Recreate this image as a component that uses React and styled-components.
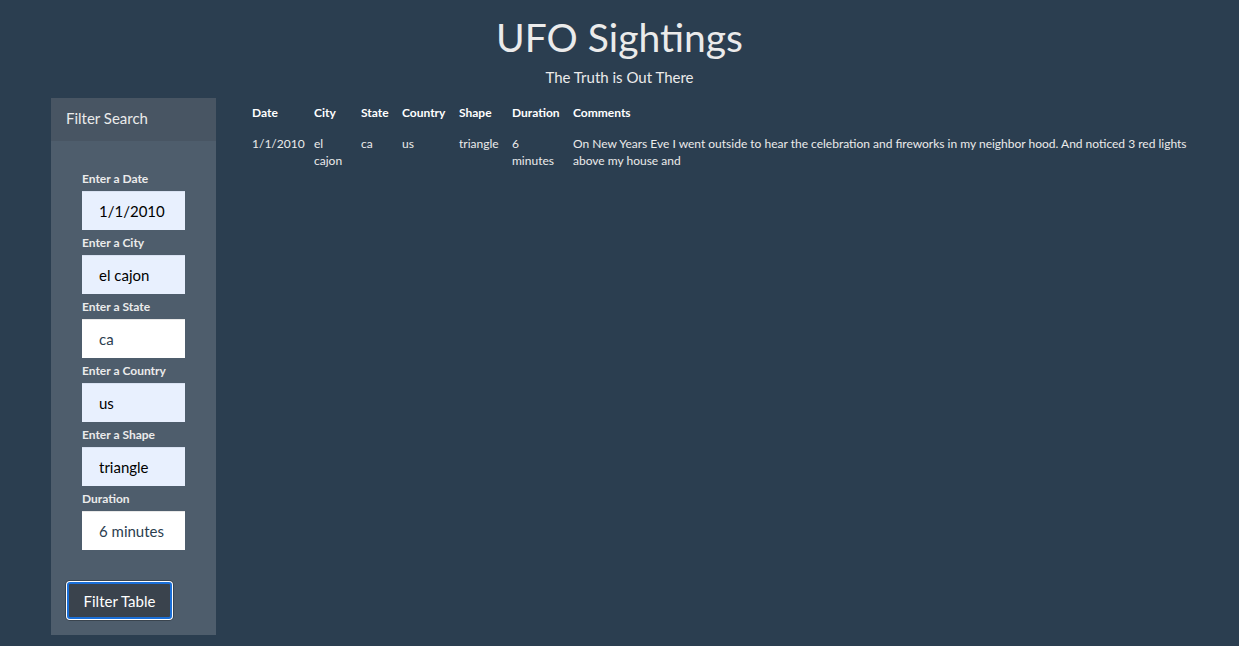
import React from 'react'
import styled, { createGlobalStyle } from 'styled-components'

const GlobalStyle = createGlobalStyle`
    html, body {
        margin: 0;
        padding: 0;
        background: #2b3e50;
        color: #ebebeb;
        font-family: Lato, "Open Sans", "Liberation Sans", sans-serif;
        font-size: 15px;
    }
`

const Page = styled.div`
    min-height: 646px;
    box-sizing: border-box;
`

const Header = styled.header`
    text-align: center;
    padding-top: 12px;
`

const Title = styled.h1`
    margin: 0;
    font-size: 39px;
    font-weight: 400;
    line-height: 50px;
    color: #ebebeb;
`

const Subtitle = styled.p`
    margin: 5px 0 0;
    font-size: 15px;
    line-height: 20px;
`

const Body = styled.div`
    display: flex;
    align-items: flex-start;
    padding: 11px 0 0 51px;
`

const Panel = styled.aside`
    width: 165px;
    background: #4e5d6c;
    flex-shrink: 0;
`

const PanelHeading = styled.div`
    height: 43px;
    box-sizing: border-box;
    padding: 10px 15px;
    background: #485563;
    font-size: 15px;
    line-height: 21px;
`

const PanelBody = styled.form`
    padding: 29px 15px 16px;
`

const FieldList = styled.ul`
    list-style: none;
    margin: 0;
    padding: 0 0 32px 16px;
`

const Field = styled.li`
    display: flex;
    flex-direction: column;
    & + & {
        margin-top: 4px;
    }
`

const Label = styled.label`
    font-size: 12px;
    font-weight: 700;
    line-height: 17px;
    margin-bottom: 4px;
    color: #ebebeb;
`

const Input = styled.input`
    width: 103px;
    height: 39px;
    box-sizing: border-box;
    border: none;
    border-top: 1px solid ${p => (p.$filled ? '#d9e2f2' : '#e8e8e8')};
    padding: 0 16px 0 17px;
    font-family: Lato, "Open Sans", sans-serif;
    font-size: 15px;
    color: ${p => (p.$filled ? '#000000' : '#2b3e50')};
    background: ${p => (p.$filled ? '#e8f0fe' : '#ffffff')};
    outline: none;
`

const Button = styled.button`
    display: block;
    width: 105px;
    height: 37px;
    box-sizing: border-box;
    border: 2px solid #1a6fd8;
    border-radius: 3px;
    box-shadow: 0 0 0 1px #ffffff, 0 0 0 2px #3a444e;
    background: #3a434d;
    color: #ffffff;
    font-family: Lato, "Open Sans", sans-serif;
    font-size: 15px;
    padding: 0;
    margin-left: 1px;
`

const TableWrap = styled.div`
    margin: 1px 0 0 31px;
    width: 953px;
`

const Table = styled.table`
    border-collapse: collapse;
    table-layout: fixed;
    width: 100%;
    font-size: 12px;
    line-height: 17px;
`

const Th = styled.th`
    text-align: left;
    font-weight: 700;
    color: #ffffff;
    padding: 5px 5px 9px;
    vertical-align: top;
`

const Td = styled.td`
    padding: 5px;
    vertical-align: top;
    color: #ebebeb;
`

const fields = [
    { id: 'datetime', label: 'Enter a Date', value: '1/1/2010', filled: true },
    { id: 'city', label: 'Enter a City', value: 'el cajon', filled: true },
    { id: 'state', label: 'Enter a State', value: 'ca', filled: false },
    { id: 'country', label: 'Enter a Country', value: 'us', filled: true },
    { id: 'shape', label: 'Enter a Shape', value: 'triangle', filled: true },
    { id: 'duration', label: 'Duration', value: '6 minutes', filled: false },
]

const columns = [
    { name: 'Date', width: 62 },
    { name: 'City', width: 47 },
    { name: 'State', width: 41 },
    { name: 'Country', width: 57 },
    { name: 'Shape', width: 53 },
    { name: 'Duration', width: 61 },
    { name: 'Comments', width: 632 },
]

const rows = [
    ['1/1/2010', 'el cajon', 'ca', 'us', 'triangle', '6 minutes',
        'On New Years Eve I went outside to hear the celebration and fireworks in my neighbor hood. And noticed 3 red lights above my house and'],
]

function App() {
    return (
        <Page>
            <GlobalStyle />
            <Header>
                <Title>UFO Sightings</Title>
                <Subtitle>The Truth is Out There</Subtitle>
            </Header>

            <Body>
                <Panel>
                    <PanelHeading>Filter Search</PanelHeading>
                    <PanelBody onSubmit={e => e.preventDefault()}>
                        <FieldList>
                            {fields.map(f => (
                                <Field key={f.id}>
                                    <Label htmlFor={f.id}>{f.label}</Label>
                                    <Input id={f.id} defaultValue={f.value} $filled={f.filled} />
                                </Field>
                            ))}
                        </FieldList>
                        <Button type="button">Filter Table</Button>
                    </PanelBody>
                </Panel>

                <TableWrap>
                    <Table>
                        <colgroup>
                            {columns.map(c => <col key={c.name} width={c.width} />)}
                        </colgroup>
                        <thead>
                            <tr>
                                {columns.map(c => <Th key={c.name}>{c.name}</Th>)}
                            </tr>
                        </thead>
                        <tbody>
                            {rows.map((r, i) => (
                                <tr key={i}>
                                    {r.map((cell, j) => <Td key={j}>{cell}</Td>)}
                                </tr>
                            ))}
                        </tbody>
                    </Table>
                </TableWrap>
            </Body>
        </Page>
    )
}

export default App
